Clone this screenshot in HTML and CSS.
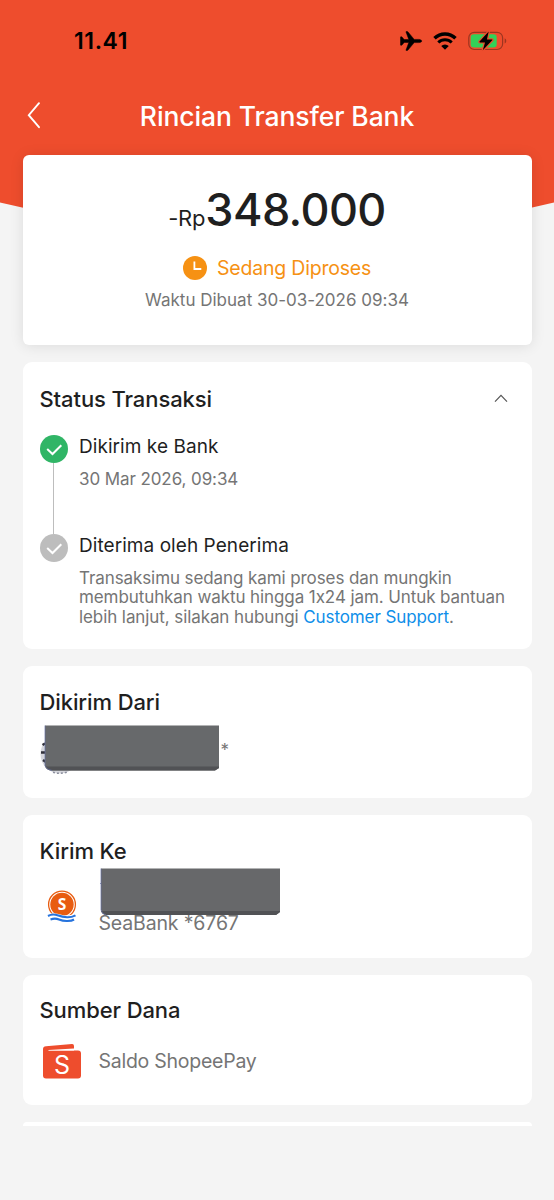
FILE: index.html
```html
<!DOCTYPE html>
<html lang="id">
<head>
    <meta charset="UTF-8">
    <meta name="viewport" content="width=device-width, initial-scale=1.0">
    <title>Rincian Transfer Bank</title>
    <link rel="stylesheet" href="styles.css">
</head>
<body>
    <!-- Header -->
    <header class="header">
        <svg class="header-bg" width="554" height="216" viewBox="0 0 554 216">
            <path d="M0 0H554V202.500Q277 269 0 202.500Z" fill="#ee4d2d"/>
        </svg>
        <div class="status-bar">
            <span class="time">11.41</span>
            <div class="status-icons">
                <svg width="22" height="20" viewBox="0 0 22 20">
                    <path d="M21.800 10C21.800 9 20 8.400 18.600 8.400H14.200L8 .9Q7.700 .6 7.300 .6H6.200Q5.800 .6 6 1L8.800 8.400L4.200 8.600L2 6Q1.800 5.700 1.400 5.700H.9Q.5 5.700 .5 6.200V13.800Q.5 14.300 .9 14.300H1.400Q1.800 14.300 2 14L4.200 11.400L8.800 11.600L6 19Q5.800 19.400 6.200 19.400H7.300Q7.700 19.400 8 19.100L14.200 11.600H18.600C20 11.600 21.800 11 21.800 10Z" stroke="#000" stroke-width=".5"/>
                </svg>
                <svg width="24" height="18" viewBox="0 0 24 18">
                    <path d="M1.500 6.300A14.800 14.800 0 0 1 22.500 6.300" fill="none" stroke="#000" stroke-width="3.400"/>
                    <path d="M5.300 10.500A9.500 9.500 0 0 1 18.700 10.500" fill="none" stroke="#000" stroke-width="3"/>
                    <path d="M8.200 13.900A5.500 5.500 0 0 1 15.800 13.900L12.500 17.200Q12 17.700 11.500 17.200Z"/>
                </svg>
                <svg width="39" height="20" viewBox="0 0 39 20">
                    <rect x=".8" y="1.300" width="33.800" height="17.200" rx="5.500" fill="none" stroke="#9c3520" stroke-width="1.200"/>
                    <path d="M36.700 7.200Q38.300 8 38.300 9.900T36.700 12.600Z" fill="#9c3520"/>
                    <rect x="2.700" y="3.300" width="26" height="13.200" rx="3.300" fill="#32d158"/>
                    <path d="M20.700 .6L11.500 10.600Q11.200 11.400 12 11.400H17L14.800 19.300L24.400 9.100Q24.700 8.400 24 8.400H18.900Z" stroke="#ee4d2d" stroke-width="2.400"/>
                    <path d="M20.700 .6L11.500 10.600Q11.200 11.400 12 11.400H17L14.800 19.300L24.400 9.100Q24.700 8.400 24 8.400H18.900Z"/>
                </svg>
            </div>
        </div>
        <div class="nav-bar">
            <svg class="back" width="14" height="28" viewBox="0 0 14 28">
                <path d="M12 2.200L1.800 14.200L12 26.200" fill="none" stroke="#fff" stroke-width="1.900" stroke-linecap="round"/>
            </svg>
            <h1>Rincian Transfer Bank</h1>
        </div>
    </header>

    <main class="content">
        <section class="card summary">
            <div class="amount"><span class="currency">-Rp</span>348.000</div>
            <div class="state">
                <svg width="24" height="24" viewBox="0 0 24 24">
                    <circle cx="12" cy="12" r="12" fill="#f69113"/>
                    <path d="M11.400 5.500V13H18.300" fill="none" stroke="#fff" stroke-width="1.800"/>
                </svg>
                <span>Sedang Diproses</span>
            </div>
            <div class="created">Waktu Dibuat 30-03-2026 09:34</div>
        </section>

        <section class="card status">
            <div class="card-head">
                <h2>Status Transaksi</h2>
                <svg width="14" height="9" viewBox="0 0 14 9">
                    <path d="M1 7.600L7 1.300L13 7.600" fill="none" stroke="#555" stroke-width="1.200"/>
                </svg>
            </div>
            <div class="step">
                <div class="marker">
                    <svg width="28" height="28" viewBox="0 0 28 28">
                        <circle cx="14" cy="14" r="14" fill="#30b566"/>
                        <path d="M7.200 14L12.500 19L21.300 10.200" fill="none" stroke="#fff" stroke-width="2"/>
                    </svg>
                    <div class="line"></div>
                </div>
                <div class="step-body">
                    <h3>Dikirim ke Bank</h3>
                    <p>30 Mar 2026, 09:34</p>
                </div>
            </div>
            <div class="step">
                <div class="marker">
                    <svg width="28" height="28" viewBox="0 0 28 28">
                        <circle cx="14" cy="14" r="14" fill="#bdbdbd"/>
                        <path d="M7.200 14L12.500 19L21.300 10.200" fill="none" stroke="#fff" stroke-width="2"/>
                    </svg>
                </div>
                <div class="step-body">
                    <h3>Diterima oleh Penerima</h3>
                    <p>Transaksimu sedang kami proses dan mungkin<br>membutuhkan waktu hingga 1x24 jam. Untuk bantuan<br>lebih lanjut, silakan hubungi <a>Customer Support</a>.</p>
                </div>
            </div>
        </section>

        <section class="card from">
            <h2>Dikirim Dari</h2>
            <div class="from-row">
                <svg width="180" height="50" viewBox="0 0 180 50">
                    <circle cx="20" cy="29" r="19.500" fill="#d5d6dc"/>
                    <path d="M2.500 20L5 18.500M1 27.500H5M3 35L6 37" stroke="#30303a" stroke-width="2.500"/>
                    <path d="M13 47.300Q20 49.500 28 46.800" fill="none" stroke="#8a8d9c" stroke-width="1.500" stroke-dasharray="2 2"/>
                    <path d="M5 .5H179V43L175 45.500H12Q7 45.500 5 41Z" fill="#67696b"/>
                    <path d="M5 41.500H179V43L175 45.500H12Q7 45.500 5 41.500Z" fill="#515255"/>
                    <path d="M5 .5V41Q7 45 12 45.500" fill="none" stroke="#6570a5" stroke-width=".7"/>
                </svg>
                <span>*</span>
            </div>
        </section>

        <section class="card to">
            <h2>Kirim Ke</h2>
            <div class="to-row">
                <svg class="seabank" width="30" height="32" viewBox="0 0 30 32">
                    <circle cx="15" cy="14.500" r="13.400" fill="#fff" stroke="#e85c10" stroke-width="1.300"/>
                    <circle cx="15" cy="14.500" r="11.700" fill="#e85c10"/>
                    <text x="15" y="19.800" class="seabank-s">S</text>
                    <path d="M0 25Q5 22 10.500 23.800T20 25.500T30 22.500V32H0Z" fill="#fff"/>
                    <path d="M1 26Q5.500 23.500 10.500 25.300T20 27.300T28.500 25.300M3.500 29.500Q8 27.800 12 29.500T20.500 31T27 29.500" fill="none" stroke="#2673dd" stroke-width="2.100"/>
                </svg>
                <div class="account">
                    <svg width="181" height="48" viewBox="0 0 181 48">
                        <path d="M1 .5H180V44L176 47H6Q2 46.500 1 42Z" fill="#67686a"/>
                        <path d="M1 43H180V44L176 47H6Q2 46.500 1 43Z" fill="#515255"/>
                        <path d="M1 .5V42Q2 46 6 47M0 15.500H1" fill="none" stroke="#6570a5" stroke-width=".7"/>
                    </svg>
                    <span>SeaBank *6767</span>
                </div>
            </div>
        </section>

        <section class="card source">
            <h2>Sumber Dana</h2>
            <div class="source-row">
                <svg width="38" height="35" viewBox="0 0 38 35">
                    <path d="M3 2.300L29 .1Q31 0 31 2V6.500H35Q38 6.500 38 9.500V31.500Q38 34.500 35 34.500H3Q0 34.500 0 31.500V5Q0 2.600 3 2.300Z" fill="#ee4d2d"/>
                    <path d="M5.500 6.100L31 4.500V6.700H6Q4.800 6.600 5.500 6.100Z" fill="#fff"/>
                    <text x="19" y="29.500" class="wallet-s">S</text>
                </svg>
                <span>Saldo ShopeePay</span>
            </div>
        </section>

        <div class="next-card"></div>
    </main>
</body>
</html>
```
FILE: styles.css
```css
* {
    box-sizing: border-box;
}

body {
    margin: 0;
    height: 1200px;
    overflow: hidden;
    background: #f4f4f4;
    color: #1f1f1f;
    font-family: Inter, "Liberation Sans", sans-serif;
    font-feature-settings: "calt" 0;
}

h1, h2, h3, p {
    margin: 0;
}

svg {
    display: block;
    flex: none;
    overflow: visible;
}

/* Header */
.header {
    position: relative;
    height: 155px;
    color: white;
}

.header-bg {
    position: absolute;
    top: 0;
    left: 0;
}

.status-bar {
    position: relative;
    height: 82px;
    padding: 0 47px 0 74px;
    display: flex;
    align-items: center;
    justify-content: space-between;
}

.time {
    color: black;
    font-size: 23px;
    font-weight: 600;
    letter-spacing: 0.6px;
}

.status-icons {
    display: flex;
    align-items: center;
    gap: 11px;
}

.nav-bar {
    position: relative;
    height: 68px;
    display: flex;
    align-items: center;
    justify-content: center;
}

.back {
    position: absolute;
    left: 27px;
    top: 19px;
}

h1 {
    font-size: 26.5px;
    font-weight: 500;
    letter-spacing: -0.1px;
}

/* Cards */
.content {
    position: relative;
    width: 509px;
    margin: 0 auto;
    display: flex;
    flex-direction: column;
    gap: 17px;
}

.card {
    padding: 0 17px;
    background: white;
    border-radius: 9px;
}

h2 {
    font-size: 22px;
    line-height: 28px;
    font-weight: 500;
    letter-spacing: -0.1px;
}

.summary {
    height: 190px;
    padding-top: 26px;
    border-radius: 6px;
    box-shadow: 0 1px 14px rgba(0, 0, 0, 0.1);
    display: flex;
    flex-direction: column;
    align-items: center;
}

.amount {
    height: 58px;
    font-size: 45px;
    line-height: 58px;
    font-weight: 500;
    letter-spacing: -0.6px;
}

.currency {
    font-size: 22px;
    font-weight: 400;
    letter-spacing: -0.2px;
}

.state {
    margin-top: 17px;
    display: flex;
    align-items: center;
    gap: 10px;
    color: #f69113;
    font-size: 19.5px;
    line-height: 24px;
    letter-spacing: -0.2px;
}

.created {
    margin-top: 10px;
    color: #757575;
    font-size: 17px;
    line-height: 20px;
}

.status {
    height: 287px;
    padding-top: 23px;
}

.card-head {
    height: 50px;
    padding-right: 7px;
    display: flex;
    justify-content: space-between;
}

.card-head svg {
    margin-top: 9px;
}

.step {
    height: 98.5px;
    display: flex;
    gap: 11.5px;
}

.marker {
    display: flex;
    flex-direction: column;
    align-items: center;
}

.line {
    width: 1px;
    flex: 1;
    background: #bdbdbd;
}

h3 {
    font-size: 19px;
    line-height: 24px;
    font-weight: 400;
    letter-spacing: 0.06px;
    white-space: nowrap;
}

.step-body p {
    margin-top: 11px;
    color: #757575;
    font-size: 17px;
    line-height: 19.8px;
    letter-spacing: -0.09px;
    white-space: nowrap;
}

.step-body a {
    color: #0e8ee9;
}

.from {
    height: 131.5px;
    padding-top: 22px;
}

.from-row {
    margin-top: 9px;
    display: flex;
    align-items: center;
    gap: 1px;
    color: #757575;
    font-size: 17px;
}

.to {
    height: 143px;
    padding-top: 22px;
}

.to-row {
    margin-top: 3px;
    padding-left: 7px;
    display: flex;
    gap: 22px;
}

.seabank {
    margin-top: 22px;
}

.seabank-s {
    fill: white;
    font-family: "Open Sans", sans-serif;
    font-size: 15.5px;
    font-weight: 700;
    text-anchor: middle;
}

.account svg {
    margin-left: 1px;
}

.account span {
    display: block;
    margin-top: -5px;
    color: #757575;
    font-size: 19.5px;
    line-height: 24px;
    letter-spacing: -0.15px;
}

.source {
    height: 130.5px;
    padding-top: 21px;
}

.source-row {
    margin-top: 20px;
    padding-left: 3px;
    display: flex;
    align-items: center;
    gap: 18px;
    color: #757575;
    font-size: 19.5px;
    line-height: 24px;
    letter-spacing: -0.25px;
}

.wallet-s {
    fill: white;
    font-size: 25px;
    text-anchor: middle;
}

.next-card {
    height: 4px;
    background: white;
    border-radius: 9px 9px 0 0;
}
```
